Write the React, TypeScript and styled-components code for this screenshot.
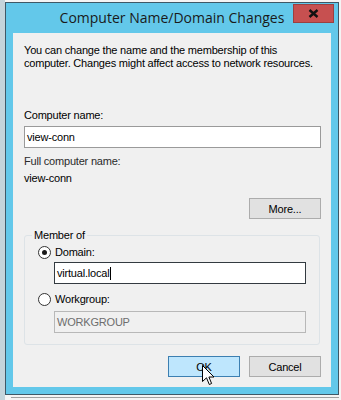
import React from "react";
import styled, {createGlobalStyle} from "styled-components";

const GlobalStyle = createGlobalStyle`
    html, body {
        margin: 0;
        padding: 0;
        background: #f4f4f4;
    }
    body {
        font-family: "Liberation Sans", Arial, sans-serif;
        font-size: 11px;
        letter-spacing: -0.2px;
        color: #000;
    }
`

const Desktop = styled.div`
    display: flex;
    width: 341px;
    height: 400px;
    overflow: hidden;
    position: relative;
`

const LeftStrip = styled.div`
    width: 5px;
    flex-shrink: 0;
    background: #c4d4db;
`

const Stage = styled.div`
    display: flex;
    flex-direction: column;
    padding-top: 2px;
`

const WindowFrame = styled.div`
    width: 334px;
    box-sizing: border-box;
    border: 1px solid #3f5866;
    background: #63c8ea;
    display: flex;
    flex-direction: column;
    padding: 0 7px 7px;
`

const TitleBar = styled.div`
    height: 30px;
    margin: 0 -7px;
    display: flex;
    align-items: center;
    justify-content: center;
    position: relative;
    font-family: "Open Sans", "Noto Sans", sans-serif;
    font-size: 14px;
    letter-spacing: 0;
    color: #1a1a1a;
    padding-bottom: 1px;
    box-sizing: border-box;
`

const CloseButton = styled.div`
    position: absolute;
    top: 1px;
    right: 4px;
    width: 41px;
    height: 19px;
    box-sizing: border-box;
    background: #c75050;
    border: 1px solid #9b4040;
    display: flex;
    align-items: center;
    justify-content: center;
`

const Client = styled.div`
    height: 354px;
    background: #f0f0f0;
    box-sizing: border-box;
    padding: 11px 10px 0 11px;
    display: flex;
    flex-direction: column;
`

const Text = styled.div<{ $top?: number; $color?: string }>`
    line-height: 13px;
    margin-top: ${p => p.$top ?? 0}px;
    color: ${p => p.$color ?? "#000"};
    white-space: nowrap;
`

const TextBox = styled.div<{ $top?: number; $disabled?: boolean; $focused?: boolean; $indent?: number }>`
    height: 22px;
    box-sizing: border-box;
    margin-top: ${p => p.$top ?? 0}px;
    margin-left: ${p => p.$indent ?? 0}px;
    border: 1px solid ${p => p.$focused ? "#333a40" : p.$disabled ? "#b8b8b8" : "#9a9a9a"};
    background: ${p => p.$disabled ? "#f0f0f0" : "#fff"};
    color: ${p => p.$disabled ? "#6d6d6d" : "#000"};
    padding: 0 2px;
    display: flex;
    align-items: center;
    line-height: 13px;
`

const Caret = styled.span`
    display: inline-block;
    width: 1px;
    height: 13px;
    background: #000;
    margin-left: 1px;
`

const ButtonRow = styled.div<{ $top: number }>`
    display: flex;
    justify-content: flex-end;
    gap: 9px;
    margin-top: ${p => p.$top}px;
`

const Button = styled.div<{ $hot?: boolean }>`
    width: 72px;
    height: 21px;
    box-sizing: border-box;
    border: 1px solid ${p => p.$hot ? "#3c7fb1" : "#acacac"};
    background: ${p => p.$hot ? "#bee6fd" : "#e1e1e1"};
    display: flex;
    align-items: center;
    justify-content: center;
    color: #000;
`

const GroupBox = styled.fieldset`
    margin: 10px 0 0;
    padding: 0 13px 11px;
    border: 1px solid #dde3e7;
    border-radius: 3px;
    display: flex;
    flex-direction: column;
    min-width: 0;
    width: 296px;
    box-sizing: border-box;
`

const Legend = styled.legend`
    margin-left: -6px;
    padding: 0 2px;
    line-height: 13px;
`

const RadioRow = styled.label<{ $top: number }>`
    display: flex;
    align-items: center;
    gap: 4px;
    height: 14px;
    margin-top: ${p => p.$top}px;
`

const RadioCircle = styled.span<{ $checked?: boolean }>`
    width: 13px;
    height: 13px;
    box-sizing: border-box;
    border-radius: 50%;
    border: 1px solid #333;
    background: #fff;
    display: flex;
    align-items: center;
    justify-content: center;

    &::after {
        content: "";
        display: ${p => p.$checked ? "block" : "none"};
        width: 5px;
        height: 5px;
        border-radius: 50%;
        background: #1a1a1a;
    }
`

const Cursor = styled.svg`
    position: absolute;
    left: 202px;
    top: 365px;
`

const BottomShade = styled.div`
    height: 5px;
    margin-left: 6px;
    border-top: 2px solid transparent;
    box-sizing: border-box;

    &::before {
        content: "";
        display: block;
        height: 1px;
        background: #a0a0a0;
    }
`

export default function App() {
    return (
        <>
            <GlobalStyle/>
            <Desktop>
                <LeftStrip/>
                <Stage>
                    <WindowFrame>
                        <TitleBar>
                            Computer Name/Domain Changes
                            <CloseButton>
                                <svg width="11" height="9" viewBox="0 0 11 9">
                                    <path d="M1.5 1 L9.5 8 M9.5 1 L1.5 8" stroke="#111" strokeWidth="2.4"/>
                                </svg>
                            </CloseButton>
                        </TitleBar>
                        <Client>
                            <Text>You can change the name and the membership of this</Text>
                            <Text>computer. Changes might affect access to network resources.</Text>
                            <Text $top={39}>Computer name:</Text>
                            <TextBox $top={4}>view-conn</TextBox>
                            <Text $top={7} $color="#2a2a2a">Full computer name:</Text>
                            <Text $top={4}>view-conn</Text>
                            <ButtonRow $top={13}>
                                <Button>More...</Button>
                            </ButtonRow>
                            <GroupBox>
                                <Legend>Member of</Legend>
                                <RadioRow $top={3}>
                                    <RadioCircle $checked/>
                                    Domain:
                                </RadioRow>
                                <TextBox $top={3} $indent={16} $focused>
                                    virtual.local<Caret/>
                                </TextBox>
                                <RadioRow $top={8}>
                                    <RadioCircle/>
                                    Workgroup:
                                </RadioRow>
                                <TextBox $top={5} $indent={16} $disabled>WORKGROUP</TextBox>
                            </GroupBox>
                            <ButtonRow $top={11}>
                                <Button $hot>OK</Button>
                                <Button>Cancel</Button>
                            </ButtonRow>
                        </Client>
                    </WindowFrame>
                    <BottomShade/>
                </Stage>
                <Cursor width="13" height="21" viewBox="0 0 13 21">
                    <path d="M0.5 0.5 L0.5 16.5 L4.5 12.8 L7.3 19.5 L9.6 18.5 L6.9 12 L12 12 Z" fill="#fff" stroke="#000" strokeWidth="1" strokeLinejoin="miter"/>
                </Cursor>
            </Desktop>
        </>
    );
}
